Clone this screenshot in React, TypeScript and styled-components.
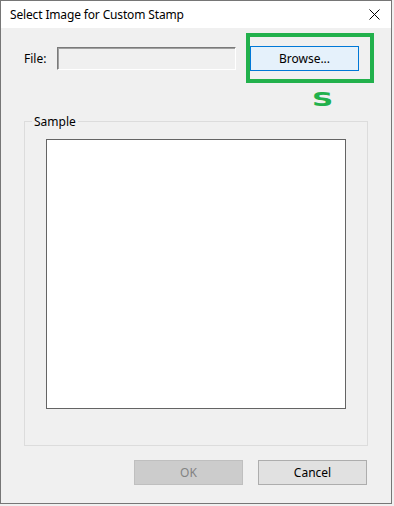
import React from "react";
import styled, { createGlobalStyle } from "styled-components";

const Global = createGlobalStyle`
body {
margin: 0;
background: #f0f0f0;
font-family: "Noto Sans", "Open Sans", sans-serif;
font-size: 12px;
color: #000;
}
`;

const Frame = styled.div`
width: 392px;
height: 504px;
box-sizing: border-box;
border: 1px solid #767676;
display: flex;
flex-direction: column;
background: #f0f0f0;
`;

const TitleBar = styled.div`
height: 27px;
flex: none;
background: #fff;
display: flex;
align-items: center;
justify-content: space-between;
padding: 0 11px 0 9px;
`;

const Title = styled.div`
font-size: 12px;
letter-spacing: -0.15px;
`;

const Content = styled.div`
position: relative;
flex: 1;
display: flex;
flex-direction: column;
padding: 18px 23px 0 23px;
`;

const FileRow = styled.div`
display: flex;
align-items: center;
height: 25px;
`;

const Label = styled.div`
width: 33px;
`;

const PathBox = styled.div`
width: 179px;
height: 23px;
box-sizing: border-box;
background: #f0f0f0;
border: 1px solid;
border-color: #7a7a7a #ffffff #ffffff #7a7a7a;
box-shadow: inset 1px 1px 0 #a0a0a0;
`;

const Button = styled.div<{ $variant?: "focus" | "disabled" }>`
width: 109px;
height: 25px;
box-sizing: border-box;
display: flex;
align-items: center;
justify-content: center;
border: 1px solid
  ${(p) => (p.$variant === "focus" ? "#0078d7" : p.$variant === "disabled" ? "#bfbfbf" : "#adadad")};
background: ${(p) => (p.$variant === "focus" ? "#e5f1fb" : p.$variant === "disabled" ? "#cccccc" : "#e1e1e1")};
color: ${(p) => (p.$variant === "disabled" ? "#838383" : "#000")};
`;

const BrowseButton = styled(Button)`
margin-left: 14px;
`;

const Highlight = styled.div`
position: absolute;
left: 245px;
top: 5px;
width: 128px;
height: 50px;
box-sizing: border-box;
border: 4px solid #22b14c;
`;

const StepMark = styled.div`
position: absolute;
left: 311px;
top: 59px;
color: #22b14c;
font-family: "DejaVu Sans", sans-serif;
font-weight: 900;
font-size: 19px;
line-height: 24px;
transform: scaleX(1.55);
transform-origin: left center;
`;

const Group = styled.fieldset`
margin: 42px 0 0 0;
width: 344px;
height: 333px;
box-sizing: border-box;
border: 1px solid #dcdcdc;
padding: 9px 21px 0 21px;
`;

const Legend = styled.legend`
margin-left: -14px;
padding: 0 2px;
font-size: 12px;
`;

const Preview = styled.div`
width: 300px;
height: 270px;
box-sizing: border-box;
background: #fff;
border: 1px solid #646464;
`;

const ButtonRow = styled.div`
width: 344px;
display: flex;
justify-content: flex-end;
gap: 15px;
margin-top: 14px;
padding-right: 1px;
box-sizing: border-box;
`;

const CloseIcon = () => (
  <svg width="11" height="11" viewBox="0 0 11 11">
    <path d="M0.5 0.5 L10.5 10.5 M10.5 0.5 L0.5 10.5" stroke="#000" strokeWidth="1" />
  </svg>
);

export default function App() {
  return (
    <>
      <Global />
      <Frame>
        <TitleBar>
          <Title>Select Image for Custom Stamp</Title>
          <CloseIcon />
        </TitleBar>
        <Content>
          <FileRow>
            <Label>File:</Label>
            <PathBox />
            <BrowseButton $variant="focus">Browse...</BrowseButton>
          </FileRow>
          <Group>
            <Legend>Sample</Legend>
            <Preview />
          </Group>
          <ButtonRow>
            <Button $variant="disabled">OK</Button>
            <Button>Cancel</Button>
          </ButtonRow>
          <Highlight />
          <StepMark>S</StepMark>
        </Content>
      </Frame>
    </>
  );
}
